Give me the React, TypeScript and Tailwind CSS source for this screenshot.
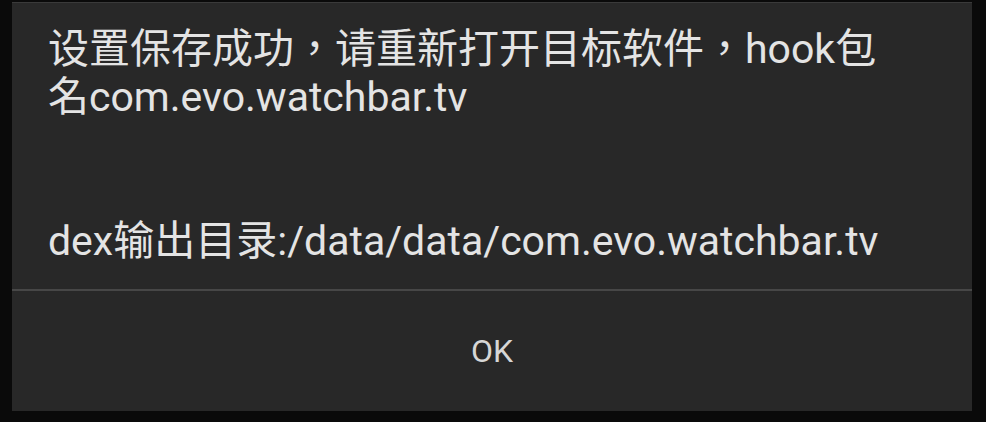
export default function App() {
  return (
    <div className="w-[986px] h-[422px] bg-[#0a0a0a] pt-[2px] pl-[12px] font-['Roboto','Noto_Sans_CJK_TC',sans-serif]">
      <div className="w-[960px] h-[409px] bg-[#282828] border-t border-[#3a3a3a] flex flex-col">
        <div className="h-[286px] pl-[36px] pt-[22px] text-[41px] leading-[48px] text-[#e4e4e4]">
          <p>设置保存成功，请重新打开目标软件，hook包</p>
          <p>名com.evo.watchbar.tv</p>
          <p>&nbsp;</p>
          <p>&nbsp;</p>
          <p>dex输出目录:/data/data/com.evo.watchbar.tv</p>
        </div>
        <div className="h-[2px] bg-[#474747]" />
        <button className="flex-1 flex items-center justify-center text-[32px] text-[#d6d6d6]">
          OK
        </button>
      </div>
    </div>
  );
}
